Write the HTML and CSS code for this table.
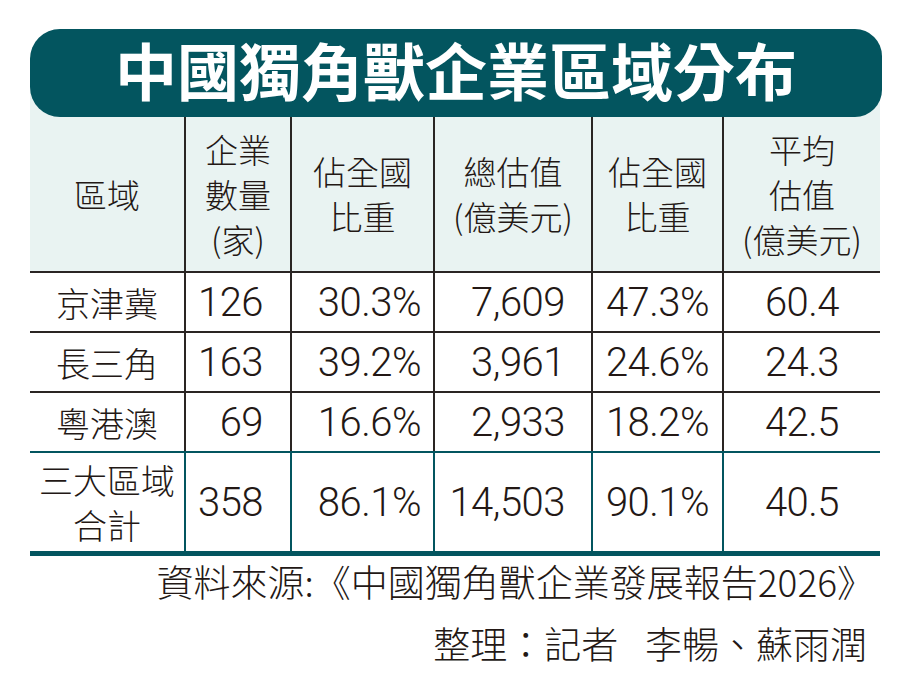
FILE: index.html
```html
<!DOCTYPE html>
<html lang="zh-Hant">
<head>
<meta charset="utf-8">
<title>中國獨角獸企業區域分布</title>
<link rel="stylesheet" href="styles.css">
</head>
<body>
<div class="chart">
  <div class="title-wrap">
    <h1 class="title">中國獨角獸企業區域分布</h1>
  </div>
  <table class="data">
    <colgroup>
      <col class="c1"><col class="c2"><col class="c3"><col class="c4"><col class="c5"><col class="c6">
    </colgroup>
    <thead>
      <tr>
        <th>區域</th>
        <th>企業<br>數量<br>(家)</th>
        <th>佔全國<br>比重</th>
        <th>總估值<br>(億美元)</th>
        <th>佔全國<br>比重</th>
        <th>平均<br>估值<br>(億美元)</th>
      </tr>
    </thead>
    <tbody>
      <tr>
        <td class="region">京津冀</td>
        <td class="n2">126</td>
        <td class="n3">30.3%</td>
        <td class="n4">7,609</td>
        <td class="n5">47.3%</td>
        <td class="n6">60.4</td>
      </tr>
      <tr>
        <td class="region">長三角</td>
        <td class="n2">163</td>
        <td class="n3">39.2%</td>
        <td class="n4">3,961</td>
        <td class="n5">24.6%</td>
        <td class="n6">24.3</td>
      </tr>
      <tr class="last">
        <td class="region">粵港澳</td>
        <td class="n2">69</td>
        <td class="n3">16.6%</td>
        <td class="n4">2,933</td>
        <td class="n5">18.2%</td>
        <td class="n6">42.5</td>
      </tr>
      <tr class="total">
        <td class="region">三大區域<br>合計</td>
        <td class="n2">358</td>
        <td class="n3">86.1%</td>
        <td class="n4">14,503</td>
        <td class="n5">90.1%</td>
        <td class="n6">40.5</td>
      </tr>
    </tbody>
  </table>
  <div class="notes">
    <p class="source">資料來源:《中國獨角獸企業發展報告2026》</p>
    <p class="editor">整理：記者&ensp;&nbsp;李暢、蘇雨潤</p>
  </div>
</div>
</body>
</html>
```

FILE: styles.css
```css
body {
  margin: 0;
  background: #ffffff;
  color: #231815;
  font-family: "Noto Sans CJK TC", "Noto Sans CJK SC", sans-serif;
}

.chart {
  width: 852px;
  margin: 29px 0 0 30px;
}

.title-wrap {
  width: 850px;
  background: linear-gradient(#ffffff 50%, #e9f3f2 50%);
}

.title {
  margin: 0;
  width: 852px;
  height: 88px;
  box-sizing: border-box;
  padding-bottom: 8px;
  border-radius: 30px 27px 27px 30px;
  background: #03555f;
  color: #ffffff;
  font-size: 62px;
  font-weight: 700;
  line-height: 80px;
  text-align: center;
}

.data {
  width: 850px;
  border-collapse: collapse;
  table-layout: fixed;
}

.c1 { width: 155px; }
.c2 { width: 106px; }
.c3 { width: 143px; }
.c4 { width: 158px; }
.c5 { width: 131px; }
.c6 { width: 157px; }

.data th {
  height: 154px;
  padding: 0;
  background: #e9f3f2;
  font-size: 33px;
  font-weight: 300;
  line-height: 45px;
  vertical-align: middle;
  text-align: center;
  border-bottom: 2px solid #2a2523;
  border-left: 2px solid #2a2523;
}

.data th:first-child,
.data td:first-child {
  border-left: none;
}

.data td {
  height: 58px;
  padding: 0;
  font-family: Roboto, "Liberation Sans", sans-serif;
  font-size: 40px;
  font-weight: 300;
  letter-spacing: -0.5px;
  vertical-align: middle;
  border-bottom: 2px solid #2a2523;
  border-left: 2px solid #2a2523;
}

.data tr.last td {
  border-bottom: 2px solid #03555f;
}

.data tr.total td {
  height: 98px;
  border-left-color: #03555f;
  border-bottom: 5px solid #03555f;
}

.data td.region {
  font-family: "Noto Sans CJK TC", "Noto Sans CJK SC", sans-serif;
  font-size: 34px;
  font-weight: 300;
  letter-spacing: 0;
  line-height: 45px;
  text-align: center;
}

.n2 { text-align: right; padding-right: 27px !important; }
.n3 { text-align: right; padding-right: 12px !important; }
.n4 { text-align: right; padding-right: 26px !important; }
.n5 { text-align: center; }
.n6 { text-align: center; }

.notes {
  width: 852px;
  text-align: right;
  font-size: 37px;
  font-weight: 300;
  line-height: 50px;
}

.source {
  margin: 0;
  padding-right: 8px;
}

.editor {
  margin: 12px 0 0;
  padding-right: 15px;
}
```
